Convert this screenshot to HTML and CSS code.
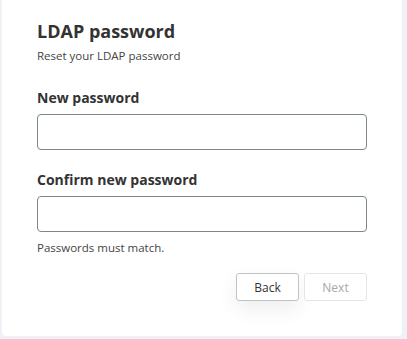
FILE: index.html
```html
<!DOCTYPE html>
<html>
<head>
<meta charset="utf-8">
<link rel="stylesheet" href="styles.css">
</head>
<body>
<div class="card">
  <h1 class="title">LDAP password</h1>
  <p class="subtitle">Reset your LDAP password</p>
  <label class="label" for="np">New password</label>
  <input class="input" id="np" type="password">
  <label class="label label-2" for="cp">Confirm new password</label>
  <input class="input" id="cp" type="password">
  <p class="help">Passwords must match.</p>
  <div class="actions">
    <button class="btn btn-back">Back</button>
    <button class="btn btn-next" disabled>Next</button>
  </div>
</div>
</body>
</html>
```
FILE: styles.css
```css
html, body {
  margin: 0;
  padding: 0;
  background: #eef2f6;
  font-family: "Open Sans", sans-serif;
  color: #333;
}
body {
  padding: 0 5px 3px 2px;
  height: 339px;
  box-sizing: border-box;
}
.card {
  background: #fff;
  border-radius: 0 0 4px 4px;
  height: 336px;
  box-sizing: border-box;
  padding: 19px 35px 0 35px;
  display: flex;
  flex-direction: column;
}
.title {
  margin: 0;
  font-size: 18px;
  line-height: 24px;
  font-weight: 700;
  color: #333;
}
.subtitle {
  margin: 5px 0 0;
  font-size: 11.5px;
  line-height: 16px;
  color: #444;
}
.label {
  display: block;
  margin-top: 24px;
  font-size: 14px;
  line-height: 20px;
  font-weight: 700;
  color: #333;
}
.label-2 { margin-top: 20px; }
.input {
  margin-top: 6px;
  height: 36px;
  width: 100%;
  box-sizing: border-box;
  border: 1px solid #7b8884;
  border-radius: 4px;
  background: #fff;
}
.help {
  margin: 8px 0 0;
  font-size: 11.5px;
  line-height: 16px;
  color: #444;
}
.actions {
  margin-top: 17px;
  display: flex;
  justify-content: flex-end;
  gap: 5px;
}
.btn {
  width: 63px;
  height: 28px;
  box-sizing: border-box;
  border-radius: 3px;
  background: #fff;
  font-family: "Open Sans", sans-serif;
  font-size: 12px;
}
.btn-back {
  border: 1px solid #bfc3c6;
  color: #333;
  box-shadow: 0 8px 20px rgba(0,0,0,0.07);
}
.btn-next {
  border: 1px solid #e3e5e7;
  color: #a4a8ab;
}
```
